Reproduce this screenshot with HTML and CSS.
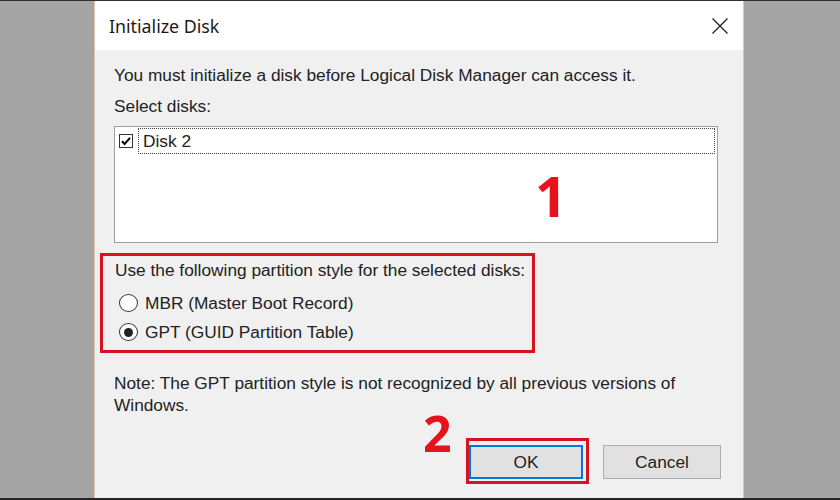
FILE: index.html
```html
<!DOCTYPE html>
<html lang="en">
<head>
  <meta charset="UTF-8" />
  <title>Initialize Disk</title>
  <link rel="stylesheet" href="styles.css">
</head>
<body>
  <div class="dialog">
    <!-- Title bar -->
    <div class="titlebar">
      <span class="title">Initialize Disk</span>
      <svg class="close-x" width="16" height="16" viewBox="0 0 16 16">
        <path d="M0.5 0.5L15.5 15.5M15.5 0.5L0.5 15.5" stroke="#1f1f1f" stroke-width="1.3" fill="none"/>
      </svg>
    </div>

    <div class="content">
      <p class="intro">You must initialize a disk before Logical Disk Manager can access it.</p>
      <p class="label">Select disks:</p>

      <!-- Disk list -->
      <div class="listbox">
        <div class="list-item">
          <svg class="check" width="14" height="14" viewBox="0 0 14 14">
            <rect x="0.5" y="0.5" width="13" height="13" fill="#fff" stroke="#333"/>
            <path d="M3 7.2L5.6 10L11 3.8" stroke="#000" stroke-width="2" fill="none"/>
          </svg>
          <span class="focus">Disk 2</span>
        </div>
        <span class="step step-one">1</span>
      </div>

      <!-- Partition style -->
      <div class="style-group mark">
        <p class="group-label">Use the following partition style for the selected disks:</p>
        <label class="radio-row">
          <input type="radio" name="style" class="radio" />
          <span>MBR (Master Boot Record)</span>
        </label>
        <label class="radio-row second">
          <input type="radio" name="style" class="radio" checked />
          <span>GPT (GUID Partition Table)</span>
        </label>
      </div>

      <p class="note">Note: The GPT partition style is not recognized by all previous versions of<br>Windows.</p>

      <!-- Buttons -->
      <div class="buttons">
        <div class="mark ok-mark">
          <span class="step step-two">2</span>
          <button class="btn btn-default">OK</button>
        </div>
        <button class="btn btn-cancel">Cancel</button>
      </div>
    </div>
  </div>
</body>
</html>
```

FILE: styles.css
```css
html, body { margin:0; height:100%; }
body { background:#a4a4a4; border-top:1px solid #3b2c27; border-bottom:2px solid #262626; box-sizing:border-box; height:500px; padding-left:94px; overflow:hidden; }

.dialog { width:650px; height:100%; box-sizing:border-box; background:#f0f0f0; border-left:1px solid #e2c4b4; border-right:1px solid #e2c4b4; display:flex; flex-direction:column; }

/* Title bar */
.titlebar { height:49px; background:#fff; display:flex; align-items:center; justify-content:space-between; padding:0 15px 0 14px; flex-shrink:0; }
.title { font:17.8px "Noto Sans", "Liberation Sans", sans-serif; color:#1a1a1a; }

/* Body */
.content { padding:15px 22px 0 19px; font:17.3px "Liberation Sans", Arial, sans-serif; color:#222; }
.content p { margin:0; line-height:20px; }
.label { margin-top:11px !important; }

/* Disk list */
.listbox { position:relative; margin:10px 3px 0 0; height:117px; box-sizing:border-box; background:#fff; border:1px solid #a0a0a0; }
.list-item { display:flex; align-items:center; height:26px; margin:1px; padding-left:3px; }
.check { margin-right:5px; flex-shrink:0; }
.focus { flex:1; height:100%; box-sizing:border-box; margin-right:1px; padding-left:4px; border:1px dotted #444; display:flex; align-items:center; }

/* Red annotation boxes and step numbers */
.mark { border:3px solid #d8121e; }
.step { position:absolute; font:700 56px/1 "Open Sans", sans-serif; color:#e5131c; }
.step-one { left:420px; top:40px; }
.step-two { font-size:50px; left:-46px; top:-33px; }

/* Partition style group */
.style-group { margin:10px 0 0 -14px; width:435px; box-sizing:border-box; padding:4px 0 8px 12px; }
.radio-row { display:flex; align-items:center; height:20px; margin-top:13px; }
.radio-row.second { margin-top:9px; }
.radio { appearance:none; -webkit-appearance:none; margin:0 7px 0 4px; width:19px; height:18px; border:1px solid #333; border-radius:50%; background:#fff; display:grid; place-items:center; }
.radio:checked::after { content:""; width:9px; height:9px; border-radius:50%; background:#222; }

.note { margin-top:19px !important; line-height:22px !important; }

/* Buttons */
.buttons { display:flex; justify-content:flex-end; align-items:flex-start; gap:14px; margin-top:22px; }
.ok-mark { position:relative; padding:4px 3px 2px 0; }
.btn { width:114px; height:34px; font:17.3px "Liberation Sans", Arial, sans-serif; color:#222; background:#e1e1e1; border:1px solid #adadad; padding:0; }
.btn-default { border:2px solid #0078d7; }
.btn-cancel { width:118px; margin-top:7px; }
```
